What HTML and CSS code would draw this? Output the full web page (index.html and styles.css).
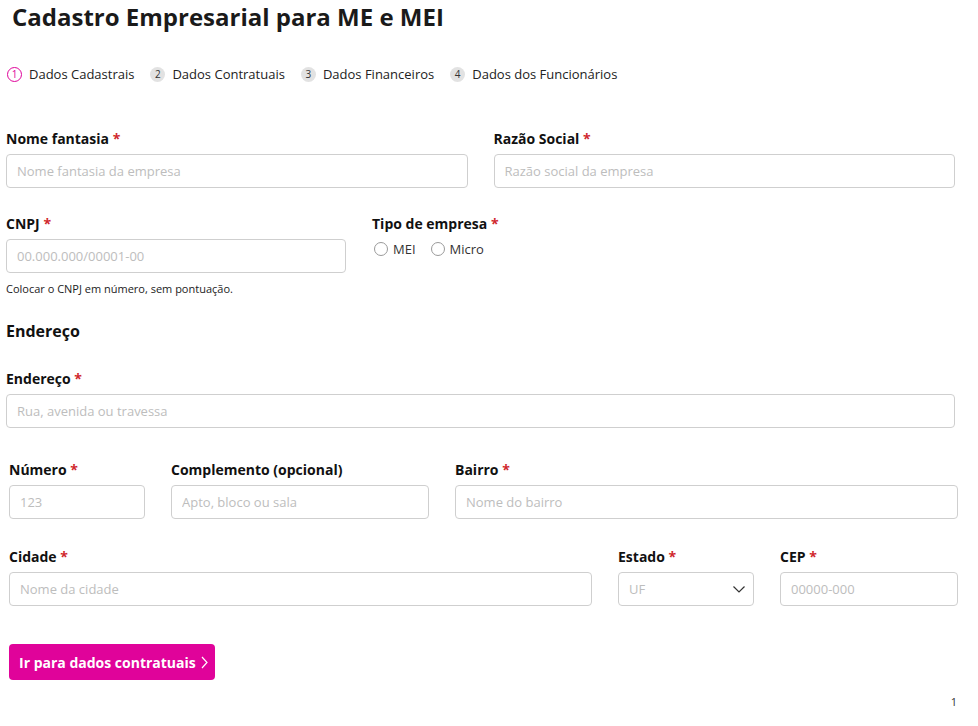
FILE: index.html
```html
<!DOCTYPE html>
<html lang="pt-BR">
<head>
<meta charset="utf-8">
<title>Cadastro Empresarial para ME e MEI</title>
<link rel="stylesheet" href="styles.css">
</head>
<body>
<div class="page">
  <h1 class="title">Cadastro Empresarial para ME e MEI</h1>

  <ol class="stepper">
    <li class="step active"><span class="step-num">1</span>Dados Cadastrais</li>
    <li class="step"><span class="step-num">2</span>Dados Contratuais</li>
    <li class="step"><span class="step-num">3</span>Dados Financeiros</li>
    <li class="step"><span class="step-num">4</span>Dados dos Funcionários</li>
  </ol>

  <form class="form">
    <div class="row row-two">
      <div class="field">
        <label class="label">Nome fantasia <span class="req">*</span></label>
        <input class="input" type="text" placeholder="Nome fantasia da empresa">
      </div>
      <div class="field">
        <label class="label">Razão Social <span class="req">*</span></label>
        <input class="input" type="text" placeholder="Razão social da empresa">
      </div>
    </div>

    <div class="row row-cnpj">
      <div class="field">
        <label class="label">CNPJ <span class="req">*</span></label>
        <input class="input" type="text" placeholder="00.000.000/00001-00">
        <p class="help">Colocar o CNPJ em número, sem pontuação.</p>
      </div>
      <div class="field">
        <label class="label">Tipo de empresa <span class="req">*</span></label>
        <div class="radios">
          <label class="radio"><span class="radio-dot"></span>MEI</label>
          <label class="radio"><span class="radio-dot"></span>Micro</label>
        </div>
      </div>
    </div>

    <h2 class="section">Endereço</h2>

    <div class="row">
      <div class="field">
        <label class="label">Endereço <span class="req">*</span></label>
        <input class="input" type="text" placeholder="Rua, avenida ou travessa">
      </div>
    </div>

    <div class="address">
      <div class="row row-num">
        <div class="field">
          <label class="label">Número <span class="req">*</span></label>
          <input class="input" type="text" placeholder="123">
        </div>
        <div class="field">
          <label class="label">Complemento (opcional)</label>
          <input class="input" type="text" placeholder="Apto, bloco ou sala">
        </div>
        <div class="field">
          <label class="label">Bairro <span class="req">*</span></label>
          <input class="input" type="text" placeholder="Nome do bairro">
        </div>
      </div>

      <div class="row row-city">
        <div class="field">
          <label class="label">Cidade <span class="req">*</span></label>
          <input class="input" type="text" placeholder="Nome da cidade">
        </div>
        <div class="field">
          <label class="label">Estado <span class="req">*</span></label>
          <div class="select">
            <span class="select-text">UF</span>
            <svg class="select-chev" width="12" height="7" viewBox="0 0 12 7"><path d="M0.5 0.5l5.5 5.5 5.5-5.5" fill="none" stroke="#333" stroke-width="1.2"/></svg>
          </div>
        </div>
        <div class="field">
          <label class="label">CEP <span class="req">*</span></label>
          <input class="input" type="text" placeholder="00000-000">
        </div>
      </div>

      <button class="btn" type="button">Ir para dados contratuais
        <svg class="btn-chev" width="7" height="13" viewBox="0 0 7 13"><path d="M1 1l5 5.5L1 12" fill="none" stroke="#fff" stroke-width="1.2"/></svg>
      </button>
    </div>
  </form>

  <div class="page-num">1</div>
</div>
</body>
</html>
```

FILE: styles.css
```css
* { box-sizing: border-box; }
html, body { margin: 0; padding: 0; background: #fff; }
body {
  font-family: "Open Sans", "Noto Sans", sans-serif;
  color: #111;
}
.page {
  width: 978px;
  padding: 0 0 0 6px;
}
.title {
  margin: 0;
  padding: 2px 0 0 6px;
  font-size: 24px;
  line-height: 30px;
  font-weight: 700;
  color: #1a1a1a;
}
.stepper {
  list-style: none;
  margin: 29px 0 0 1px;
  padding: 0;
  display: flex;
  gap: 16px;
  height: 26px;
  align-items: center;
}
.step {
  display: flex;
  align-items: center;
  font-size: 13px;
  color: #222;
}
.step-num {
  width: 15px;
  height: 15px;
  border-radius: 50%;
  background: #e2e2e2;
  font-size: 10px;
  line-height: 15px;
  text-align: center;
  margin-right: 7px;
  color: #333;
}
.step.active .step-num {
  background: #fff;
  border: 1.5px solid #e0039a;
  color: #e0039a;
  line-height: 12px;
}
.form {
  margin-top: 40px;
  width: 949px;
}
.row {
  display: grid;
  grid-template-columns: 1fr;
  column-gap: 26px;
}
.row-two + .row { margin-top: 24px; }
.row-two { grid-template-columns: 1fr 1fr; }
.row-cnpj { grid-template-columns: 340px 1fr; }
.row-num { grid-template-columns: 136px 258px 1fr; }
.row-city { grid-template-columns: 1fr 136px 178px; }
.field { display: flex; flex-direction: column; }
.label {
  display: block;
  font-size: 14px;
  font-weight: 700;
  line-height: 20px;
  margin: 2px 0 5px 0;
  color: #111;
  white-space: nowrap;
}
.req { color: #d0282e; }
.input, .select {
  width: 100%;
  height: 34px;
  border: 1px solid #cfcfcf;
  border-radius: 4px;
  padding: 0 10px;
  font-family: "Open Sans", "Noto Sans", sans-serif;
  font-size: 13px;
  color: #333;
  background: #fff;
  outline: none;
}
.input::placeholder { color: #bdbdbd; }
.help {
  margin: 8px 0 0 0;
  font-size: 11px;
  line-height: 16px;
  color: #222;
}
.radios {
  display: flex;
  gap: 13px;
  height: 18px;
  align-items: center;
  margin-top: 1px;
}
.radio {
  display: flex;
  align-items: center;
  font-size: 13px;
  color: #333;
}
.radio-dot {
  width: 14px;
  height: 14px;
  border-radius: 50%;
  border: 1px solid #9a9a9a;
  margin: 0 5px 0 2px;
}
.section {
  margin: 23px 0 25px 0;
  font-size: 16px;
  line-height: 22px;
  font-weight: 700;
  color: #111;
}
.address {
  margin: 30px 0 0 3px;
  width: 949px;
}
.address .row + .row { margin-top: 26px; }
.select {
  display: flex;
  align-items: center;
  justify-content: space-between;
  padding-right: 8px;
}
.select-text { color: #bdbdbd; }
.btn {
  margin-top: 38px;
  height: 36px;
  display: inline-flex;
  align-items: center;
  gap: 5px;
  padding: 0 7px 0 10px;
  border: 0;
  border-radius: 4px;
  background: #e0039a;
  color: #fff;
  font-family: "Open Sans", "Noto Sans", sans-serif;
  font-size: 14px;
  font-weight: 700;
}
.page-num {
  width: 951px;
  text-align: right;
  font-size: 11px;
  line-height: 14px;
  margin-top: 15px;
  color: #333;
}
```
